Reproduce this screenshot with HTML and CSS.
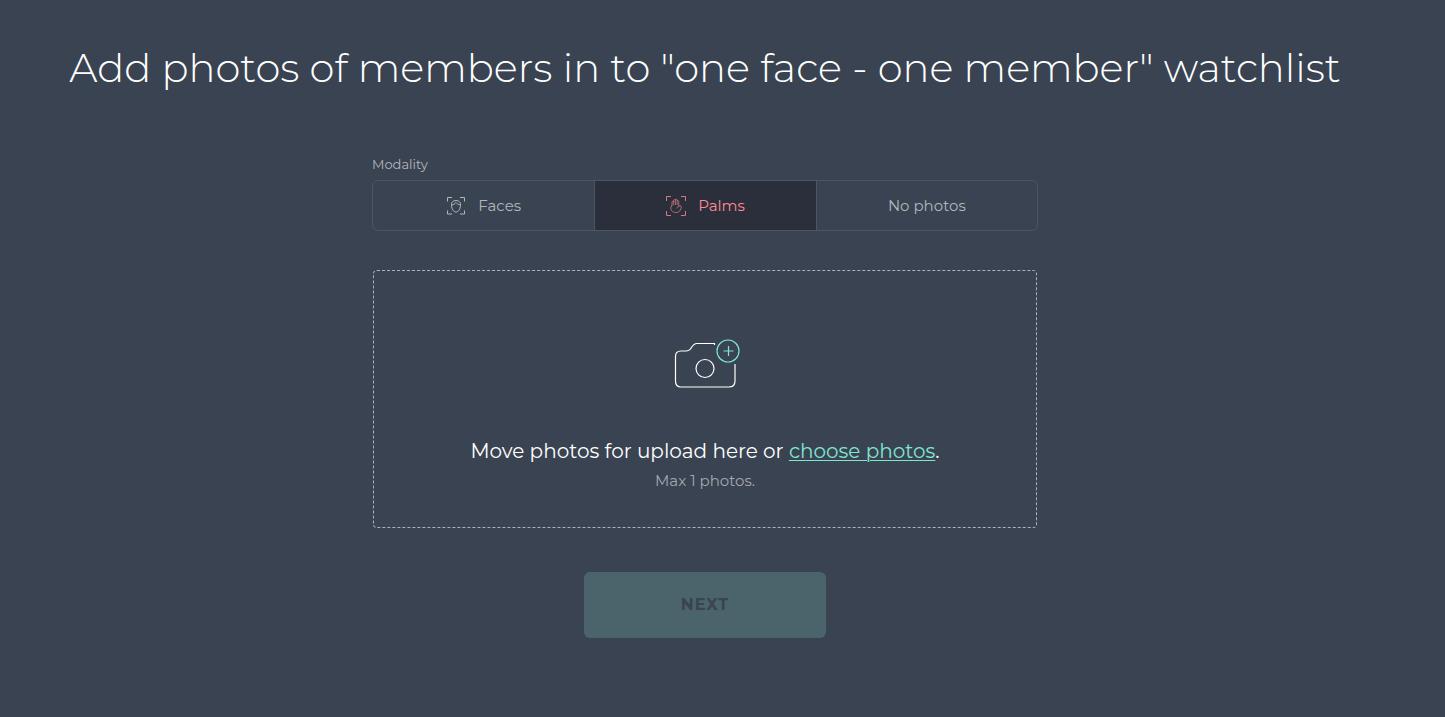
FILE: index.html
```html
<!DOCTYPE html>
<html lang="en">
<head>
<meta charset="utf-8">
<title>Add photos</title>
<link rel="stylesheet" href="styles.css">
</head>
<body>
<main class="page">
  <h1 class="title">Add photos of members in to "one face - one member" watchlist</h1>
  <form class="form">
    <div class="label" id="modality">Modality</div>
    <div class="segments" role="group" aria-labelledby="modality">
      <button type="button" class="segment" aria-pressed="false">
        <svg class="segment-icon" viewBox="0 0 20 20" aria-hidden="true">
          <path d="M1.500 5.500V1.500H6M14 1.500h4.500v4M1.500 14.500v3.500H6M14 18h4.500v-3.500"/>
          <path d="M10 4.500c-3.200 0-4.900 2-4.500 5.200.4 3.500 2 6.300 4.500 6.300s4.100-2.800 4.500-6.300C14.900 6.500 13.200 4.500 10 4.500zM6 9c1.600-.3 3-1 3.800-2.500C10.700 7.800 12.300 8.400 14 9"/>
        </svg>
        Faces
      </button>
      <button type="button" class="segment segment-active" aria-pressed="true">
        <svg class="segment-icon" viewBox="0 0 20 20" aria-hidden="true">
          <path d="M.5 5V.5H5M15 .5h4.500V5M.5 15v4.500H5M15 19.500h4.500V15"/>
          <path class="palm" d="M6 10V6c0-1.200 1.700-1.200 1.700 0V4.500c0-1.200 1.700-1.200 1.700 0V4c0-1.200 1.700-1.200 1.700 0v1.200c0-1.200 1.600-1 1.600.2v5.100c1.300-1.300 2.700-1 2.500.3-.3 3-1.700 5.700-5 5.700-4 0-6-2.700-5.200-5.500L6 9M7.700 6v3M9.400 4.500V9M11.100 5.200V9M12.700 10.500c-1 .2-1.800 1-2 2"/>
        </svg>
        Palms
      </button>
      <button type="button" class="segment" aria-pressed="false">No photos</button>
    </div>
    <div class="dropzone">
      <svg class="camera" viewBox="0 0 68 50" aria-hidden="true">
        <path d="M41.500 6V4.500H24c-3 0-4 1.500-5.500 4S16 12 13 12H8c-3.500 0-5.500 2-5.500 5.500V42c0 4 2 6 5.500 6h48c4 0 6-2 6-6V25"/>
        <circle cx="32" cy="29.500" r="9"/>
        <g class="camera-plus">
          <circle cx="55" cy="12" r="11"/>
          <path d="M55.500 7v10M50.500 12h10"/>
        </g>
      </svg>
      <p class="prompt">Move photos for upload here or <a class="choose" href="#">choose photos</a>.</p>
      <p class="hint">Max 1 photos.</p>
    </div>
    <button type="submit" class="next" disabled>NEXT</button>
  </form>
</main>
</body>
</html>
```
FILE: styles.css
```css
* {
  box-sizing: border-box;
}

body {
  margin: 0;
  background: #3a4351;
  color: #fff;
  font-family: Montserrat, Inter, sans-serif;
}

.page {
  padding: 40px 35px 40px 0;
}

.title {
  margin: 0;
  font-size: 40px;
  line-height: 56px;
  font-weight: 300;
  text-align: center;
}

.form {
  display: flex;
  flex-direction: column;
  max-width: 666px;
  margin: 58px auto 0;
}

.label {
  font-size: 13px;
  line-height: 20px;
  color: #b2b8be;
}

.segments {
  display: grid;
  grid-template-columns: repeat(3, 1fr);
  margin-top: 6px;
  border: 1px solid #4c5563;
  border-radius: 6px;
  overflow: hidden;
}

.segment {
  display: flex;
  align-items: center;
  justify-content: center;
  gap: 12px;
  height: 49px;
  padding: 0;
  border: 0;
  background: transparent;
  color: #b0b7bd;
  font-family: inherit;
  font-size: 15px;
}

.segment + .segment {
  border-left: 1px solid #4c5563;
}

.segment-active {
  background: #2a2f3b;
  color: #ff8a93;
}

.segment-icon {
  width: 20px;
  height: 20px;
  fill: none;
  stroke: currentColor;
  stroke-width: 1;
}

.segment-active .segment-icon {
  opacity: 0.8;
}

.palm {
  stroke-width: 0.8;
}

.dropzone {
  display: flex;
  flex-direction: column;
  align-items: center;
  margin: 39px 1px 0;
  padding: 68px 20px 34px;
  border: 1px dashed #a9b3bb;
  border-radius: 4px;
}

.camera {
  width: 68px;
  height: 50px;
  margin-left: 4px;
  fill: none;
  stroke: #fff;
  stroke-width: 1.2;
}

.camera-plus {
  stroke: #7ee6d0;
}

.prompt {
  margin: 48px 0 0;
  font-size: 20px;
  line-height: 28px;
}

.choose {
  color: #7ee6d0;
  text-underline-offset: 2px;
  text-decoration-thickness: 1px;
}

.hint {
  margin: 4px 0 0;
  font-size: 15px;
  line-height: 24px;
  color: #a3a8af;
}

.next {
  align-self: center;
  width: 242px;
  height: 66px;
  margin-top: 44px;
  padding: 0 0 2px;
  border: 0;
  border-radius: 6px;
  background: #4b646b;
  color: #3a4351;
  font-family: inherit;
  font-size: 16px;
  font-weight: 700;
  letter-spacing: 1px;
}
```
